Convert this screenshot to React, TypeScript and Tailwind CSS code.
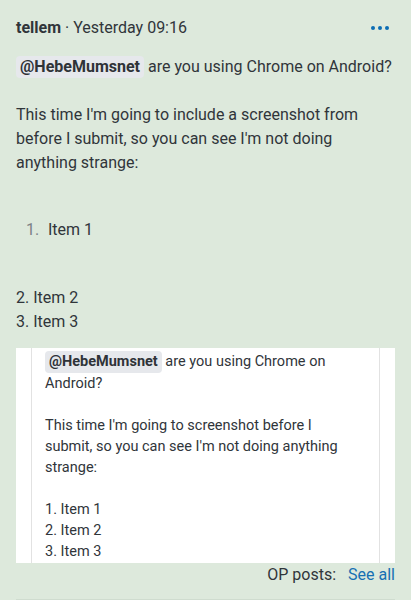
import React from "react";

const Mention = ({ name }: { name: string }) => (
  <span className="inline-block rounded-[4px] bg-[#e6e8ec] px-[4px] font-bold text-[#2f3338] leading-[22px]">
    @{name}
  </span>
);

const App = () => {
  return (
    <div
      className="min-h-[600px] bg-[#dde9dc] px-4 pt-4 text-[#30353a]"
      style={{ fontFamily: "Roboto, 'Noto Sans', sans-serif" }}
    >
      {/* header */}
      <div className="flex flex-row items-center justify-between h-6">
        <p className="text-[16px] leading-6">
          <span className="font-bold">tellem</span> · Yesterday 09:16
        </p>
        <div className="flex flex-row gap-[3px] mr-[6px]">
          <span className="h-[4px] w-[4px] rounded-full bg-[#0b6db4]" />
          <span className="h-[4px] w-[4px] rounded-full bg-[#0b6db4]" />
          <span className="h-[4px] w-[4px] rounded-full bg-[#0b6db4]" />
        </div>
      </div>

      {/* post body */}
      <div className="text-[16px] leading-6">
        <p className="mt-[15px]">
          <Mention name="HebeMumsnet" /> are you using Chrome on Android?
        </p>
        <p className="mt-6">
          This time I'm going to include a screenshot from before I submit, so
          you can see I'm not doing anything strange:
        </p>
        <div className="mt-[43px] flex flex-row">
          <span className="ml-[10px] w-[22px] text-[#7c8186]">1.</span>
          <span>Item 1</span>
        </div>
        <p className="mt-[44px]">2. Item 2</p>
        <p>3. Item 3</p>
      </div>

      {/* quoted preview */}
      <div className="mt-[14px] bg-white px-[15px]">
        <div className="border-x border-[#e2e2e2] pl-[13px] pr-[24px] pt-[3px] pb-[1px] text-[14.5px] leading-[21px]">
          <p>
            <Mention name="HebeMumsnet" /> are you using Chrome on Android?
          </p>
          <p className="mt-[21px]">
            This time I'm going to screenshot before I submit, so you can see
            I'm not doing anything strange:
          </p>
          <p className="mt-[21px]">1. Item 1</p>
          <p>2. Item 2</p>
          <p>3. Item 3</p>
        </div>
      </div>

      {/* footer */}
      <div className="flex flex-row justify-end gap-[12px] text-[16px] leading-6">
        <span>OP posts:</span>
        <a className="text-[#1670b3]">See all</a>
      </div>
      <div className="mt-[12px] border-b border-[#cfdccf]" />
    </div>
  );
};

export default App;
